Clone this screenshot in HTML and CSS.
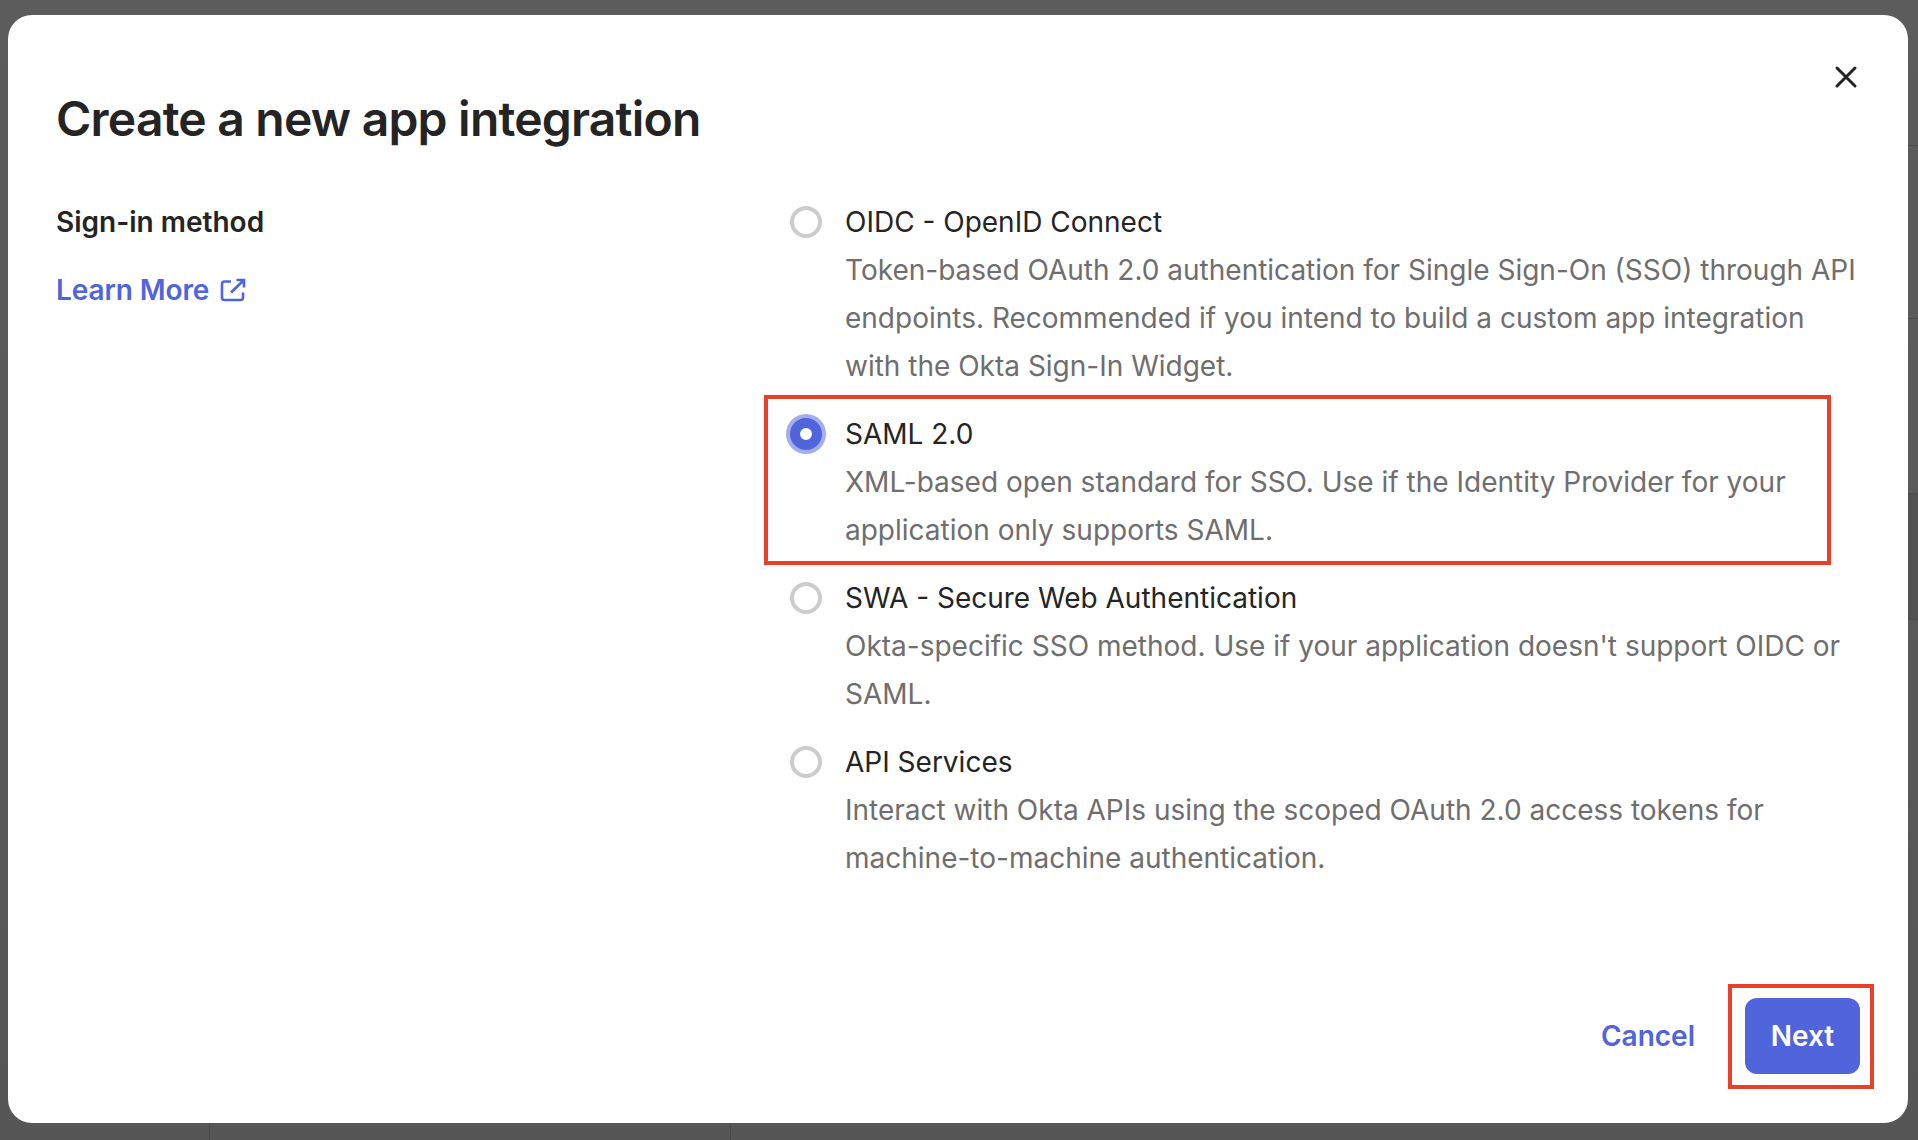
FILE: index.html
```html
<!DOCTYPE html>
<html lang="en">
<head>
<meta charset="utf-8">
<title>Create a new app integration</title>
<link rel="stylesheet" href="styles.css">
</head>
<body>
<div class="backdrop">
  <span class="back-line back-line-a"></span>
  <span class="back-line back-line-b"></span>
  <span class="back-rule back-rule-a"></span>
  <span class="back-rule back-rule-b"></span>
  <span class="back-row"></span>
  <main class="modal">
    <button class="close" aria-label="Close">
      <svg width="24" height="24" viewBox="0 0 24 24" fill="none"><path d="M3 3L21 21M21 3L3 21" stroke="#212126" stroke-width="3" stroke-linecap="round"/></svg>
    </button>
    <h1 class="title">Create a new app integration</h1>
    <div class="form">
      <div class="side">
        <div class="side-label">Sign-in method</div>
        <a class="learn" href="#">Learn More
          <svg class="ext" width="26" height="24" viewBox="0 0 26 24" fill="none"><path d="M11 3.500H4.500A2.500 2.500 0 0 0 2 6V19.500A2.500 2.500 0 0 0 4.500 22H20.500A2.500 2.500 0 0 0 23 19.500V14.500M11 14.500L23.500 2.500M16.500 2H24V9.500" stroke="#5064dc" stroke-width="2.600"/></svg>
        </a>
      </div>
      <div class="options">
        <div class="option opt-a">
          <span class="radio"></span>
          <div class="opt-text">
            <div class="opt-name">OIDC - OpenID Connect</div>
            <div class="opt-desc">Token-based OAuth 2.0 authentication for Single Sign-On (SSO) through API endpoints. Recommended if you intend to build a custom app integration with the Okta Sign-In Widget.</div>
          </div>
        </div>
        <div class="option opt-b">
          <span class="radio radio-on"></span>
          <div class="opt-text">
            <div class="opt-name">SAML 2.0</div>
            <div class="opt-desc">XML-based open standard for SSO. Use if the Identity Provider for your application only supports SAML.</div>
          </div>
          <span class="mark mark-saml"></span>
        </div>
        <div class="option opt-c">
          <span class="radio"></span>
          <div class="opt-text">
            <div class="opt-name">SWA - Secure Web Authentication</div>
            <div class="opt-desc">Okta-specific SSO method. Use if your application doesn't support OIDC or SAML.</div>
          </div>
        </div>
        <div class="option opt-d">
          <span class="radio"></span>
          <div class="opt-text">
            <div class="opt-name">API Services</div>
            <div class="opt-desc">Interact with Okta APIs using the scoped OAuth 2.0 access tokens for machine-to-machine authentication.</div>
          </div>
        </div>
      </div>
    </div>
    <div class="footer">
      <a class="cancel" href="#">Cancel</a>
      <div class="next-wrap">
        <button class="next">Next</button>
        <span class="mark mark-next"></span>
      </div>
    </div>
  </main>
</div>
</body>
</html>
```
FILE: styles.css
```css
* { box-sizing: border-box; }
html, body { margin: 0; height: 100%; }
body { font-family: Inter, "Noto Sans", sans-serif; overflow: hidden; }
.backdrop {
  position: relative;
  width: 1918px;
  height: 1140px;
  background: linear-gradient(#5c5c5c, #565656);
  padding: 15px 10px 17px 8px;
}
.back-line { position: absolute; top: 1123px; bottom: 0; width: 1px; background: #4b4b4b; }
.back-line-a { left: 209px; }
.back-line-b { left: 730px; }
.back-rule { position: absolute; right: 0; width: 10px; height: 1px; background: #4e4e4e; }
.back-rule-a { top: 145px; }
.back-rule-b { top: 318px; }
.back-row {
  position: absolute;
  right: 0;
  top: 493px;
  width: 10px;
  height: 127px;
  background: #525252;
  border-top: 1px solid #4e4e4e;
  border-bottom: 1px solid #4e4e4e;
}
.modal {
  position: relative;
  width: 1900px;
  height: 1108px;
  background: #fff;
  border-radius: 24px;
  padding: 75px 48px 0;
  display: flex;
  flex-direction: column;
}
.close {
  position: absolute;
  top: 50px;
  right: 50px;
  width: 24px;
  height: 24px;
  padding: 0;
  border: 0;
  background: none;
  display: flex;
}
.title {
  margin: 0;
  font-size: 48px;
  line-height: 58px;
  font-weight: 600;
  letter-spacing: -0.78px;
  color: #242424;
}
.form { display: flex; margin-top: 50px; flex: 1; }
.side { width: 730px; flex: none; }
.side-label {
  font-size: 28px;
  line-height: 48px;
  font-weight: 600;
  color: #242424;
}
.learn {
  display: flex;
  align-items: center;
  gap: 11px;
  margin-top: 20px;
  font-size: 28px;
  line-height: 48px;
  font-weight: 600;
  letter-spacing: -0.1px;
  color: #5064dc;
  text-decoration: none;
}
.options { flex: 1; display: flex; flex-direction: column; }
.option { position: relative; display: flex; gap: 23px; }
.opt-a { height: 212px; }
.opt-b { height: 164px; }
.opt-c { height: 164px; }
.radio {
  flex: none;
  width: 32px;
  height: 32px;
  margin: 8px 0 0 4px;
  border-radius: 50%;
  border: 4px solid #cccccc;
  background: #fff;
}
.radio-on {
  border: 10px solid #5064dc;
  box-shadow: 0 0 0 4px #a4aeec;
}
.opt-text { flex: 1; }
.opt-name { font-size: 28px; line-height: 48px; color: #242424; }
.opt-desc { font-size: 28px; line-height: 48px; color: #6e6e6e; max-width: 1012px; }
.mark { position: absolute; border: 4px solid #e9402a; pointer-events: none; }
.mark-saml { left: -22px; top: -15px; width: 1067px; height: 170px; }
.footer {
  display: flex;
  justify-content: flex-end;
  align-items: center;
  gap: 50px;
  padding: 0 0 49px;
}
.cancel { font-size: 28px; font-weight: 600; color: #5064dc; text-decoration: none; }
.next-wrap { position: relative; }
.next {
  display: block;
  width: 115px;
  height: 76px;
  border: 0;
  border-radius: 12px;
  background: #5064dc;
  color: #fff;
  font: 600 28px Inter, sans-serif;
}
.mark-next { left: -17px; top: -14px; width: 146px; height: 105px; }
```
